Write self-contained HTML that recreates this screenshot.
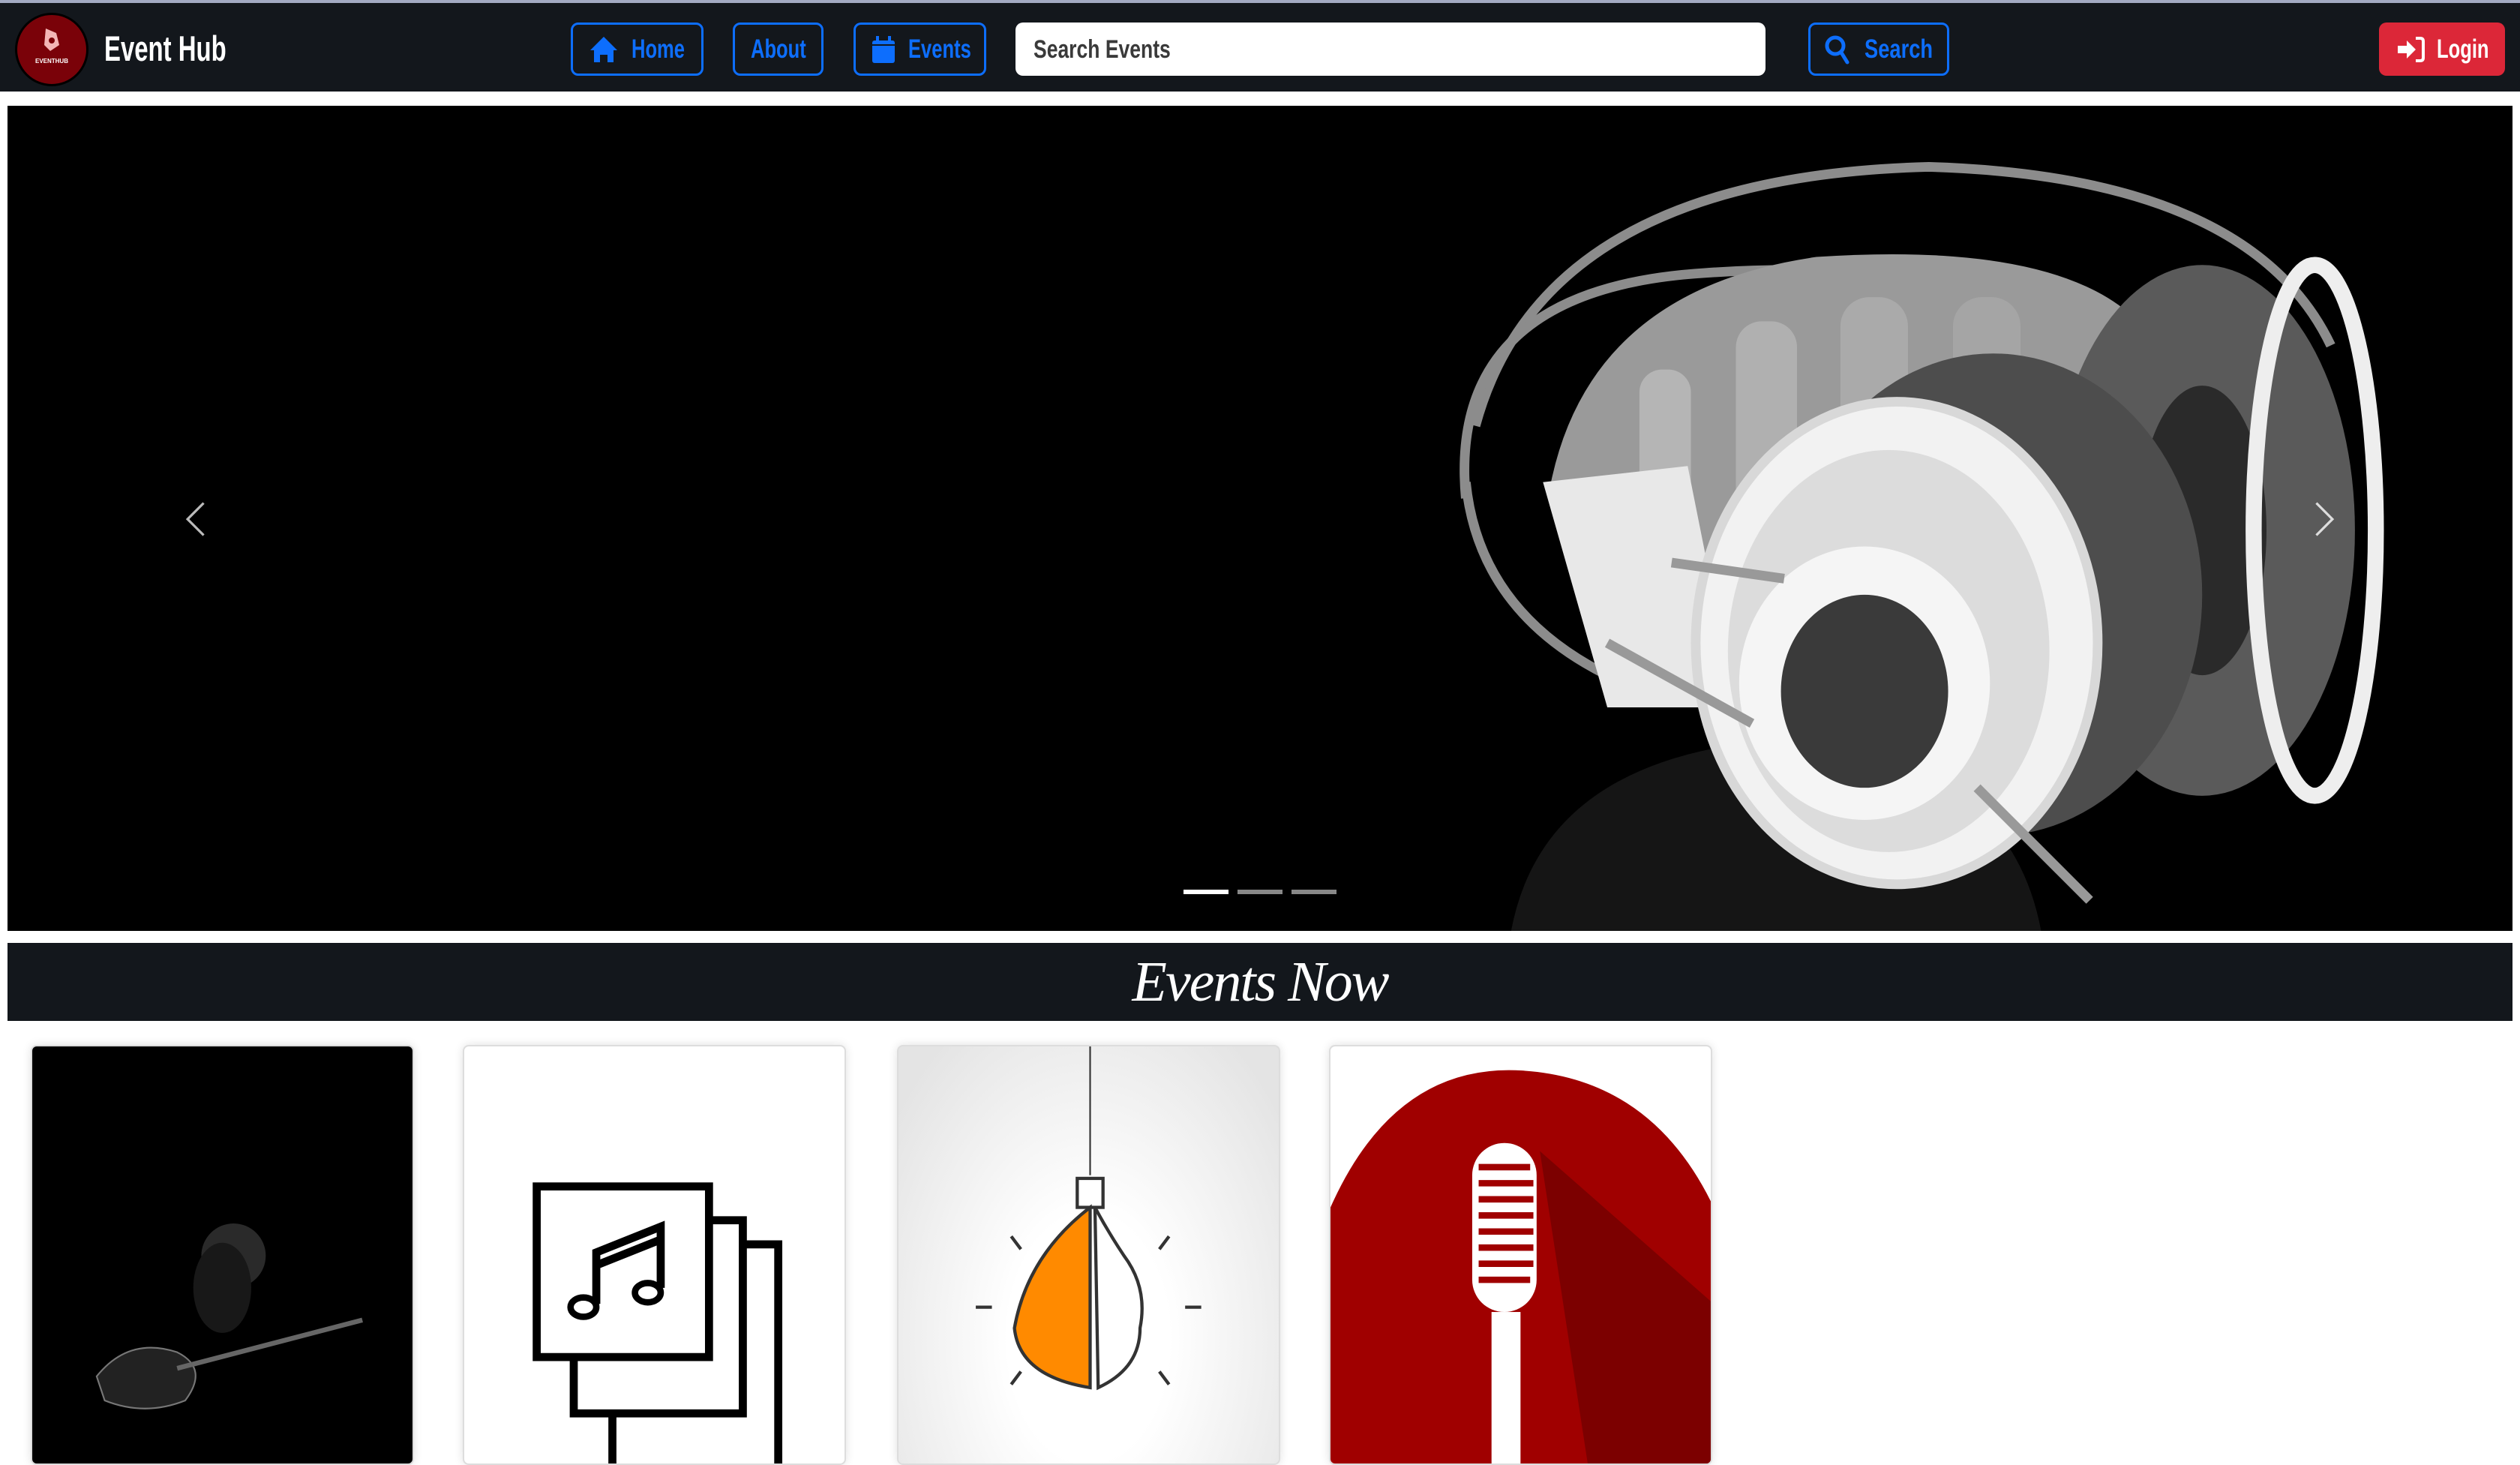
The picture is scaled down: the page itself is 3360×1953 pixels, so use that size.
<!DOCTYPE html>
<html><head><meta charset="utf-8">
<style>
*{margin:0;padding:0;box-sizing:border-box}
html,body{width:3360px;height:1868px;overflow:hidden;background:#fff;font-family:"Liberation Sans",sans-serif}
.nav{position:absolute;left:0;top:0;width:3360px;height:122px;background:#13171c;border-top:4px solid #a3aac2}
.t{position:absolute;font-weight:bold;font-size:35px;line-height:40px;top:42px;transform-origin:left center;transform:scaleX(.73);white-space:nowrap}
.blue{color:#0d6efd}
.btn{position:absolute;top:26px;height:71px;border:3px solid #0d6efd;border-radius:10px}
.ico{position:absolute}
.logo{position:absolute;left:20px;top:13px;width:98px;height:98px;border-radius:50%;background:#7a0209;border:3px solid #000}
.search{position:absolute;left:1354px;top:26px;width:1000px;height:71px;background:#fff;border-radius:10px}
.login{position:absolute;left:3172px;top:26px;width:168px;height:71px;background:#dc2738;border-radius:10px}
.car{position:absolute;left:10px;top:141px;width:3340px;height:1100px;background:#000;overflow:hidden}
.ind{position:absolute;top:1186px;height:6px;width:60px;background:#888}
.banner{position:absolute;left:10px;top:1257px;width:3340px;height:104px;background:#13171c;color:#fff;text-align:center;font-family:"Liberation Serif",serif;font-style:italic;font-size:76px;line-height:104px;letter-spacing:-2px}
.card{position:absolute;top:1393px;width:511px;height:560px;border:2px solid #ddd;border-radius:8px;overflow:hidden;box-shadow:0 0 12px rgba(0,0,0,.12)}
.card svg{display:block}
</style></head><body>
<div class="nav">
 <div class="logo">
  <svg width="92" height="92" viewBox="0 0 92 92"><path d="M38 18 L52 24 L56 40 L44 48 L36 40 Z" fill="#f3b6b6"/><circle cx="46" cy="34" r="4" fill="#7a0209"/><text x="46" y="64" fill="#fff" font-size="8" text-anchor="middle" font-family="Liberation Sans" font-weight="bold">EVENTHUB</text></svg>
 </div>
 <div class="t" style="left:139px;top:36px;color:#fff;font-size:47px;line-height:50px;transform:scaleX(.7)">Event Hub</div>
 <div class="btn" style="left:761px;width:177px"></div>
 <svg class="ico" style="left:784px;top:43px" width="42" height="38" viewBox="0 0 40 38"><path d="M20 2 L38 20 H33 V36 H25 V26 H15 V36 H7 V20 H2 Z" fill="#0d6efd"/></svg>
 <div class="t blue" style="left:842px">Home</div>
 <div class="btn" style="left:977px;width:121px"></div>
 <div class="t blue" style="left:1001px">About</div>
 <div class="btn" style="left:1138px;width:177px"></div>
 <svg class="ico" style="left:1161px;top:42px" width="34" height="40" viewBox="0 0 34 38"><rect x="2" y="7" width="30" height="30" rx="3" fill="#0d6efd"/><rect x="7" y="1" width="4" height="9" fill="#0d6efd"/><rect x="23" y="1" width="4" height="9" fill="#0d6efd"/><rect x="2" y="12" width="30" height="2" fill="#13171c"/></svg>
 <div class="t blue" style="left:1211px">Events</div>
 <div class="search"></div>
 <div class="t" style="left:1378px;color:#3a3a3a;font-size:34px;transform:scaleX(.78)">Search Events</div>
 <div class="btn" style="left:2411px;width:188px"></div>
 <svg class="ico" style="left:2432px;top:42px" width="38" height="40" viewBox="0 0 38 40"><circle cx="15" cy="15" r="11" stroke="#0d6efd" stroke-width="5" fill="none"/><path d="M23 24 L31 37" stroke="#0d6efd" stroke-width="5" stroke-linecap="round"/></svg>
 <div class="t blue" style="left:2486px;transform:scaleX(.78)">Search</div>
 <div class="login"></div>
 <svg class="ico" style="left:3195px;top:44px" width="40" height="36" viewBox="0 0 40 36"><path d="M2 13 H14 V6 L26 18 L14 30 V23 H2 Z" fill="#fff"/><path d="M26 3 H32 Q36 3 36 7 V29 Q36 33 32 33 H26" stroke="#fff" stroke-width="4" fill="none"/></svg>
 <div class="t" style="left:3249px;color:#fff">Login</div>
</div>

<div class="car">
<svg width="3340" height="1100" viewBox="5 66 1558 513" preserveAspectRatio="none">
 <path d="M940 580 Q960 470 1110 460 Q1250 470 1270 580 Z" fill="#151515"/>
 <path d="M918 265 Q960 110 1200 104 Q1400 110 1450 215" stroke="#8c8c8c" stroke-width="6" fill="none"/>
 <path d="M912 310 Q900 180 1060 170 Q1200 160 1300 200" stroke="#8c8c8c" stroke-width="6" fill="none"/>
 <path d="M912 300 Q920 380 1000 420" stroke="#8c8c8c" stroke-width="6" fill="none"/>
 <path d="M965 300 Q990 180 1130 160 Q1280 150 1330 200 L1330 330 L1000 380 Z" fill="#9a9a9a"/>
 <rect x="1020" y="230" width="32" height="110" rx="14" fill="#b5b5b5"/>
 <rect x="1080" y="200" width="38" height="120" rx="16" fill="#b0b0b0"/>
 <rect x="1145" y="185" width="42" height="100" rx="18" fill="#aaa"/>
 <rect x="1215" y="185" width="42" height="80" rx="18" fill="#a5a5a5"/>
 <ellipse cx="1370" cy="330" rx="95" ry="165" fill="#5a5a5a"/>
 <ellipse cx="1370" cy="330" rx="40" ry="90" fill="#2a2a2a"/>
 <ellipse cx="1440" cy="330" rx="38" ry="165" fill="none" stroke="#eee" stroke-width="10"/>
 <ellipse cx="1240" cy="370" rx="130" ry="150" fill="#4d4d4d"/>
 <path d="M960 300 L1050 290 L1080 440 L1000 440 Z" fill="#e8e8e8"/>
 <ellipse cx="1180" cy="400" rx="125" ry="150" fill="#f2f2f2" stroke="#d8d8d8" stroke-width="6"/>
 <ellipse cx="1175" cy="405" rx="100" ry="125" fill="#dcdcdc"/>
 <ellipse cx="1160" cy="425" rx="78" ry="85" fill="#f5f5f5"/>
 <ellipse cx="1160" cy="430" rx="52" ry="60" fill="#3a3a3a"/>
 <path d="M1040 350 L1110 360 M1000 400 L1090 450" stroke="#999" stroke-width="6"/>
 <path d="M1230 490 L1300 560" stroke="#999" stroke-width="6"/>
 <path d="M127 313 L117 323 L127 333" stroke="#bbb" stroke-width="1.5" fill="none"/>
 <path d="M1441 313 L1451 323 L1441 333" stroke="#ddd" stroke-width="1.5" fill="none"/>
</svg>
</div>
<div class="ind" style="left:1578px;background:#fff"></div>
<div class="ind" style="left:1650px"></div>
<div class="ind" style="left:1722px"></div>

<div class="banner">Events Now</div>

<div class="card" style="left:41px;background:#000">
<svg width="511" height="560" viewBox="0 0 238 261" preserveAspectRatio="none">
 <ellipse cx="125" cy="130" rx="20" ry="20" fill="#2a2a2a"/>
 <ellipse cx="118" cy="150" rx="18" ry="28" fill="#181818"/>
 <path d="M40 205 Q60 180 90 190 Q110 200 95 220 Q70 230 45 220 Z" fill="#222" stroke="#777" stroke-width="1"/>
 <path d="M90 200 L205 170" stroke="#666" stroke-width="3"/>
</svg>
</div>
<div class="card" style="left:617px;background:#fff">
<svg width="511" height="560" viewBox="0 0 238 261" preserveAspectRatio="none">
 <path d="M92 123 V261 M92 123 H195 V261" stroke="#000" stroke-width="5" fill="none"/>
 <rect x="68" y="108" width="105" height="120" fill="#fff" stroke="#000" stroke-width="5"/>
 <rect x="45" y="87" width="107" height="106" fill="#fff" stroke="#000" stroke-width="5"/>
 <path d="M82 160 V128 L122 112 V150 M82 136 L122 120" stroke="#000" stroke-width="5" fill="none"/>
 <ellipse cx="74" cy="162" rx="8" ry="6" fill="none" stroke="#000" stroke-width="4"/>
 <ellipse cx="114" cy="153" rx="8" ry="6" fill="none" stroke="#000" stroke-width="4"/>
</svg>
</div>
<div class="card" style="left:1196px;background:radial-gradient(ellipse at 50% 70%,#fff 30%,#e4e4e4 90%)">
<svg width="511" height="560" viewBox="0 0 238 261" preserveAspectRatio="none">
 <path d="M119 0 V80" stroke="#333" stroke-width="1"/>
 <rect x="111" y="82" width="16" height="18" fill="#fff" stroke="#333" stroke-width="2"/>
 <path d="M119 100 Q80 130 72 175 Q75 205 119 212 Z" fill="#ff8a00" stroke="#333" stroke-width="2"/>
 <path d="M122 100 Q130 115 140 130 Q155 150 150 175 Q150 200 124 212 Z" fill="#fff" stroke="#333" stroke-width="2"/>
 <path d="M48 162 H58 M178 162 H188 M70 118 L76 126 M168 118 L162 126 M70 210 L76 202 M168 210 L162 202" stroke="#333" stroke-width="2"/>
</svg>
</div>
<div class="card" style="left:1772px;background:#fff">
<svg width="511" height="560" viewBox="0 0 238 261" preserveAspectRatio="none">
 <path d="M0 261 V100 Q40 10 119 15 Q200 20 238 100 V261 Z" fill="#a00000"/>
 <path d="M130 65 L238 160 V261 H160 Z" fill="#7c0000"/>
 <rect x="88" y="60" width="40" height="105" rx="20" fill="#fff"/>
 <path d="M92 75 H124 M92 85 H126 M92 95 H126 M92 105 H126 M92 115 H126 M92 125 H126 M92 135 H126 M92 145 H124" stroke="#a00000" stroke-width="4"/>
 <rect x="100" y="165" width="18" height="96" fill="#fff"/>
</svg>
</div>
</body></html>
